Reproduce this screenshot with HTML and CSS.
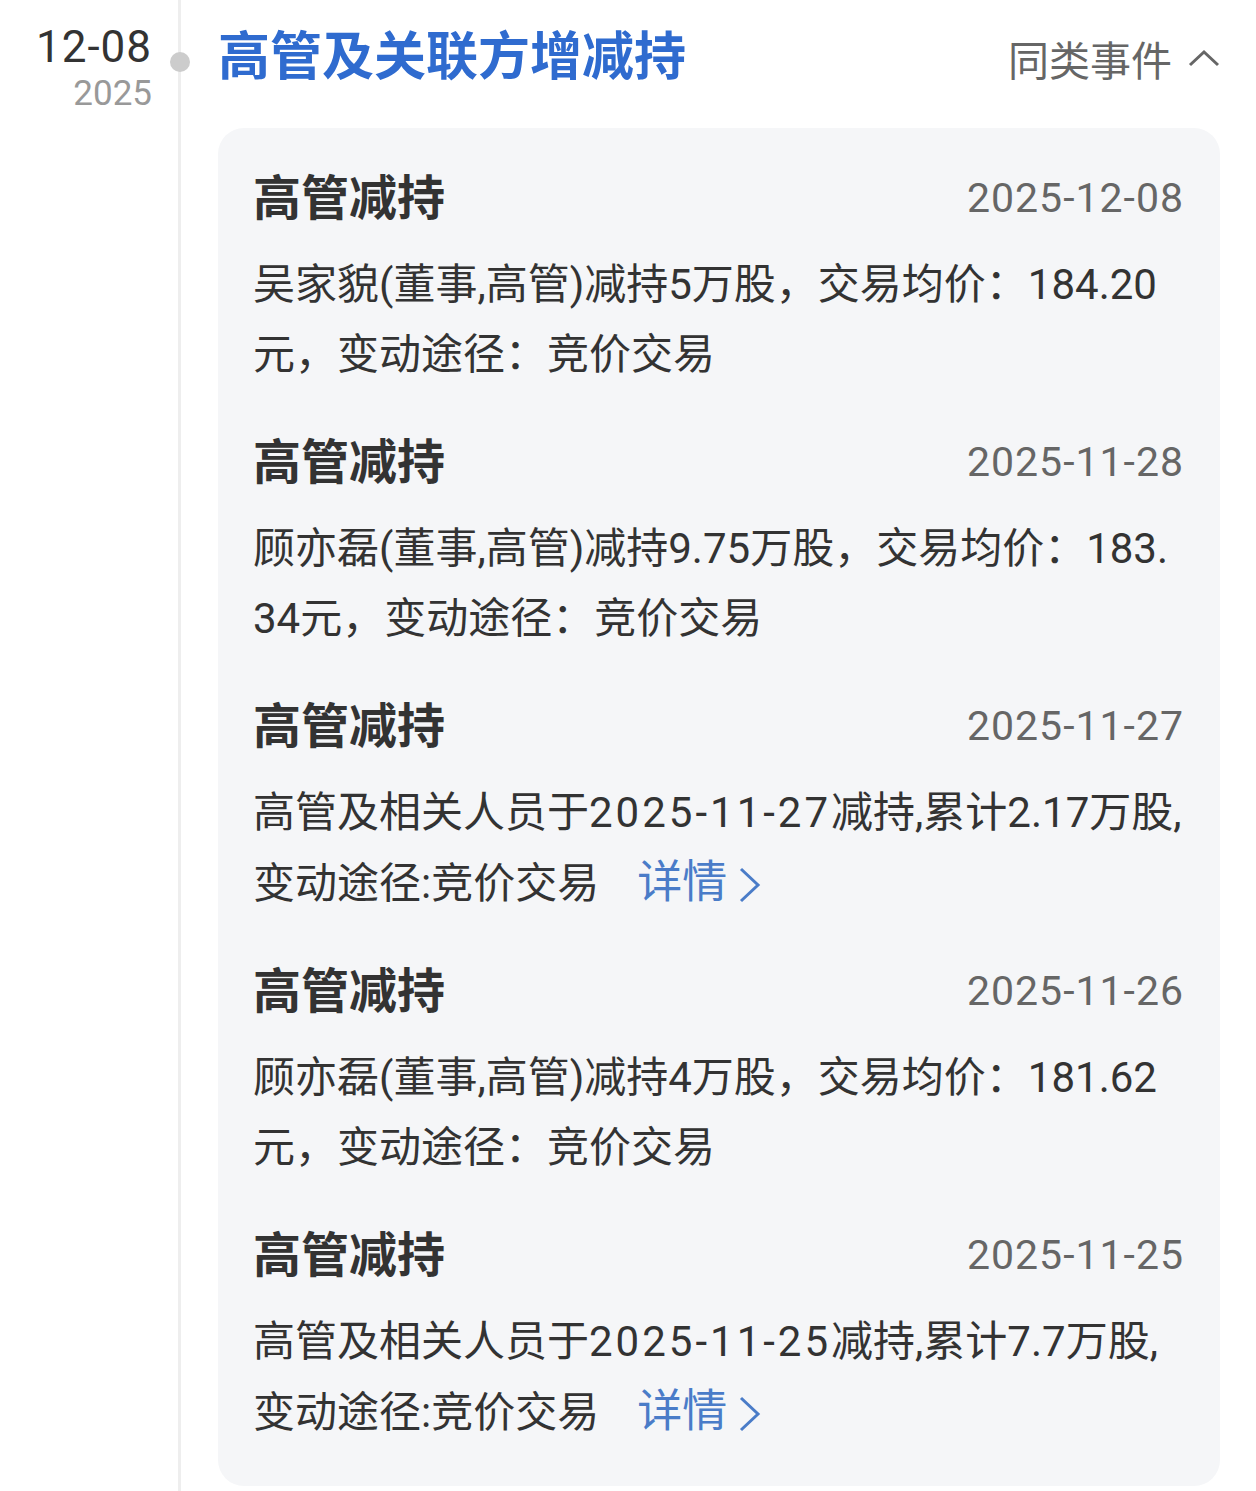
FILE: index.html
```html
<!DOCTYPE html>
<html lang="zh-CN">
<head>
    <meta charset="UTF-8">
    <meta name="viewport" content="width=device-width, initial-scale=1.0">
    <title>高管及关联方增减持</title>
    <link rel="stylesheet" href="styles.css">
</head>
<body>
    <div class="event">
        <div class="date-col">
            <div class="day">12-08</div>
            <div class="year">2025</div>
            <span class="dot"></span>
        </div>
        <div class="event-body">
            <div class="event-head">
                <h1 class="event-title">高管及关联方增减持</h1>
                <div class="similar">
                    同类事件
                    <svg class="chevron-up" width="32" height="20" viewBox="0 0 32 20">
                        <polyline points="2,17 16,4 30,17" fill="none" stroke="#666" stroke-width="3"/>
                    </svg>
                </div>
            </div>
            <div class="card">
                <div class="item">
                    <div class="item-head">
                        <h2>高管减持</h2>
                        <span class="item-date">2025-12-08</span>
                    </div>
                    <p>吴家貌(董事,高管)减持5万股，交易均价：184.20元，变动途径：竞价交易</p>
                </div>
                <div class="item">
                    <div class="item-head">
                        <h2>高管减持</h2>
                        <span class="item-date">2025-11-28</span>
                    </div>
                    <p>顾亦磊(董事,高管)减持9.75万股，交易均价：183.34元，变动途径：竞价交易</p>
                </div>
                <div class="item">
                    <div class="item-head">
                        <h2>高管减持</h2>
                        <span class="item-date">2025-11-27</span>
                    </div>
                    <p>高管及相关人员于<span class="num">2025-11-27</span>减持,累计2.17万股,变动途径:竞价交易<a class="detail" href="#">详情<svg width="22" height="36" viewBox="0 0 22 36"><polyline points="2,2 19,18 2,34" fill="none" stroke="#4a7cc8" stroke-width="3"/></svg></a></p>
                </div>
                <div class="item">
                    <div class="item-head">
                        <h2>高管减持</h2>
                        <span class="item-date">2025-11-26</span>
                    </div>
                    <p>顾亦磊(董事,高管)减持4万股，交易均价：181.62元，变动途径：竞价交易</p>
                </div>
                <div class="item">
                    <div class="item-head">
                        <h2>高管减持</h2>
                        <span class="item-date">2025-11-25</span>
                    </div>
                    <p>高管及相关人员于<span class="num">2025-11-25</span>减持,累计7.7万股,变动途径:竞价交易<a class="detail" href="#">详情<svg width="22" height="36" viewBox="0 0 22 36"><polyline points="2,2 19,18 2,34" fill="none" stroke="#4a7cc8" stroke-width="3"/></svg></a></p>
                </div>
            </div>
        </div>
    </div>
</body>
</html>
```

FILE: styles.css
```css
body {
    margin: 0;
    background-color: #fff;
    font-family: Roboto, "Noto Sans CJK SC", sans-serif;
    color: #333;
}
.event {
    display: flex;
    min-height: 1491px;
}
.date-col {
    position: relative;
    width: 152px;
    padding: 22px 26px 0 0;
    border-right: 3px solid #eee;
    text-align: right;
    flex-shrink: 0;
}
.day {
    font-size: 44px;
    line-height: 50px;
    letter-spacing: 1px;
    color: #333;
}
.year {
    font-size: 35px;
    line-height: 44px;
    color: #999;
}
.dot {
    position: absolute;
    top: 52px;
    right: -12px;
    width: 20px;
    height: 20px;
    border-radius: 50%;
    background-color: #ccc;
}
.event-body {
    flex: 1;
    padding: 24px 36px 0 37px;
}
.event-head {
    display: flex;
    justify-content: space-between;
    align-items: center;
    margin-bottom: 36px;
}
.event-title {
    margin: 0;
    font-size: 52px;
    line-height: 68px;
    font-weight: bold;
    color: #2f6bcf;
}
.similar {
    display: flex;
    align-items: center;
    gap: 16px;
    font-size: 41px;
    color: #666;
}
.card {
    background-color: #f5f6f8;
    border-radius: 26px;
    padding: 40px 36px 38px 35px;
}
.item + .item {
    margin-top: 42px;
}
.item-head {
    display: flex;
    justify-content: space-between;
    align-items: center;
    height: 60px;
    margin-bottom: 22px;
}
.item-head h2 {
    margin: -8px 0 0;
    font-size: 48px;
    font-weight: bold;
    color: #333;
}
.item-date {
    font-size: 41px;
    letter-spacing: 1px;
    color: #666;
}
.item p {
    margin: 0;
    font-size: 42px;
    line-height: 70px;
    color: #333;
    word-break: break-all;
}
.num {
    letter-spacing: 3px;
}
.detail {
    margin-left: 38px;
    font-size: 45px;
    color: #4a7cc8;
    text-decoration: none;
    white-space: nowrap;
}
.detail svg {
    margin-left: 12px;
    vertical-align: -5px;
}
```
